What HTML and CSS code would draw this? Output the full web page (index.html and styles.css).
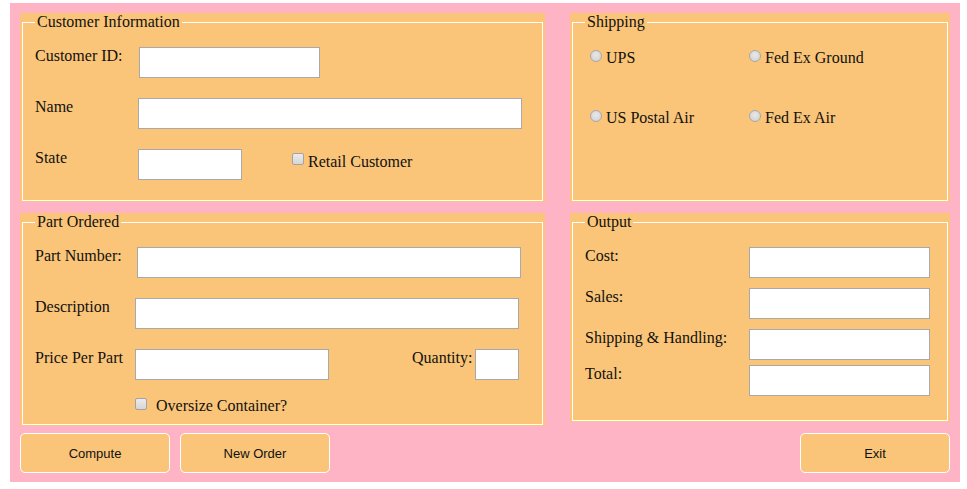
FILE: index.html
```html
<!DOCTYPE html>
<html lang="en">
<head>
<meta charset="utf-8">
<title>Order Form</title>
<link rel="stylesheet" href="styles.css">
</head>
<body>
<div class="page">
  <div class="columns">
    <div class="col col-left">
      <div class="box box-top">
        <fieldset class="group">
          <legend>Customer Information</legend>
          <div class="fields">
            <div class="row">
              <label class="lbl lbl-104">Customer ID:</label>
              <input type="text" class="field w-181">
            </div>
            <div class="row">
              <label class="lbl lbl-103">Name</label>
              <input type="text" class="field w-384">
            </div>
            <div class="row">
              <label class="lbl lbl-103">State</label>
              <input type="text" class="field w-104">
              <label class="check check-retail"><input type="checkbox" class="cb">Retail Customer</label>
            </div>
          </div>
        </fieldset>
      </div>
      <div class="box box-part">
        <fieldset class="group">
          <legend>Part Ordered</legend>
          <div class="fields">
            <div class="row">
              <label class="lbl lbl-102">Part Number:</label>
              <input type="text" class="field w-384">
            </div>
            <div class="row">
              <label class="lbl lbl-100">Description</label>
              <input type="text" class="field w-384">
            </div>
            <div class="row">
              <label class="lbl lbl-100">Price Per Part</label>
              <input type="text" class="field w-194">
              <label class="lbl-qty">Quantity:</label>
              <input type="text" class="field w-44">
            </div>
            <div class="row row-oversize">
              <label class="check check-oversize"><input type="checkbox" class="cb">Oversize Container?</label>
            </div>
          </div>
        </fieldset>
      </div>
    </div>
    <div class="col col-right">
      <div class="box box-top">
        <fieldset class="group">
          <legend>Shipping</legend>
          <div class="radios">
            <label class="radio"><input type="radio" name="ship" class="rb">UPS</label>
            <label class="radio"><input type="radio" name="ship" class="rb">Fed Ex Ground</label>
            <label class="radio"><input type="radio" name="ship" class="rb">US Postal Air</label>
            <label class="radio"><input type="radio" name="ship" class="rb">Fed Ex Air</label>
          </div>
        </fieldset>
      </div>
      <div class="box box-output">
        <fieldset class="group">
          <legend>Output</legend>
          <div class="out-fields">
            <div class="row out-row">
              <label class="lbl lbl-164">Cost:</label>
              <input type="text" class="field w-181">
            </div>
            <div class="row out-row">
              <label class="lbl lbl-164">Sales:</label>
              <input type="text" class="field w-181">
            </div>
            <div class="row out-row">
              <label class="lbl lbl-164">Shipping &amp; Handling:</label>
              <input type="text" class="field w-181">
            </div>
            <div class="row out-row out-last">
              <label class="lbl lbl-164">Total:</label>
              <input type="text" class="field w-181">
            </div>
          </div>
        </fieldset>
      </div>
    </div>
  </div>
  <div class="buttons">
    <button type="button" class="btn">Compute</button>
    <button type="button" class="btn">New Order</button>
    <button type="button" class="btn btn-exit">Exit</button>
  </div>
</div>
</body>
</html>
```

FILE: styles.css
```css
html, body {
  margin: 0;
  padding: 0;
  background: #ffffff;
}

body {
  font-family: "Liberation Serif", "Times New Roman", serif;
  font-size: 16px;
  color: #111;
}

.page {
  margin: 3px 0 0 10px;
  width: 950px;
  box-sizing: border-box;
  padding: 10px 10px 9px 10px;
  background: #ffb4c6;
}

.columns {
  display: flex;
  align-items: flex-start;
  gap: 25px;
}

.col {
  display: flex;
  flex-direction: column;
  gap: 11px;
}

.col-left { width: 525px; }
.col-right { width: 380px; }

.box {
  background: #fac578;
  display: flex;
  flex-direction: column;
  box-sizing: border-box;
  padding: 0 2px 1px 2px;
}

.box-top { height: 189px; }
.box-part { height: 213px; }
.box-output { height: 209px; }

.group {
  flex: 1;
  margin: 0;
  min-width: 0;
  border: 1px solid #ffffff;
  padding: 0 12px;
}

.group legend {
  padding: 0 2px;
  font-size: 16px;
  line-height: 18px;
}

.fields {
  padding-top: 16px;
  display: flex;
  flex-direction: column;
  gap: 20px;
}

.row {
  display: flex;
  align-items: flex-start;
}

.lbl {
  flex: none;
  line-height: 18px;
  white-space: nowrap;
}

.lbl-104 { width: 104px; }
.lbl-103 { width: 103px; }
.lbl-102 { width: 102px; }
.lbl-100 { width: 100px; }
.lbl-164 { width: 164px; }

.field {
  flex: none;
  box-sizing: border-box;
  height: 31px;
  margin: 0;
  padding: 0 3px;
  border: 1px solid #a9a9a9;
  background: #ffffff;
  font-family: "Liberation Sans", Arial, sans-serif;
  font-size: 13px;
}

.w-181 { width: 181px; }
.w-384 { width: 384px; }
.w-104 { width: 104px; }
.w-194 { width: 194px; }
.w-44 { width: 44px; }

.lbl-qty {
  line-height: 18px;
  margin-left: 83px;
  margin-right: 3px;
  white-space: nowrap;
}

.check {
  display: flex;
  align-items: flex-start;
  line-height: 18px;
  white-space: nowrap;
}

.cb {
  appearance: none;
  -webkit-appearance: none;
  flex: none;
  width: 12px;
  height: 12px;
  box-sizing: border-box;
  border: 1px solid #a3a3a3;
  border-radius: 2px;
  background: linear-gradient(#ebebeb, #d6d6d6);
  margin: 0 4px 0 0;
}

.check-retail {
  margin-left: 50px;
  margin-top: 4px;
}

.row-oversize {
  margin-top: -3px;
}

.check-oversize {
  margin-left: 100px;
}

.check-oversize .cb {
  margin: 1px 9px 0 0;
}

.radios {
  padding-top: 18px;
  display: grid;
  grid-template-columns: 159px auto;
  row-gap: 42px;
}

.radio {
  display: flex;
  align-items: flex-start;
  line-height: 18px;
  white-space: nowrap;
}

.rb {
  appearance: none;
  -webkit-appearance: none;
  flex: none;
  width: 12px;
  height: 12px;
  box-sizing: border-box;
  border: 1px solid #a8a8a8;
  border-radius: 50%;
  background: radial-gradient(circle at 50% 40%, #e8e8e8, #cfcfcf);
  margin: 1px 4px 0 5px;
}

.out-fields {
  padding-top: 16px;
  display: flex;
  flex-direction: column;
}

.out-row + .out-row { margin-top: 10px; }
.out-row.out-last { margin-top: 5px; }

.buttons {
  margin-top: 7px;
  display: flex;
  gap: 10px;
}

.btn {
  width: 150px;
  height: 40px;
  margin: 0;
  padding: 0;
  border: 1px solid #ffffff;
  border-radius: 5px;
  background: #fac578;
  font-family: "Liberation Sans", Arial, sans-serif;
  font-size: 13px;
  color: #111;
}

.btn-exit { margin-left: auto; }
```
